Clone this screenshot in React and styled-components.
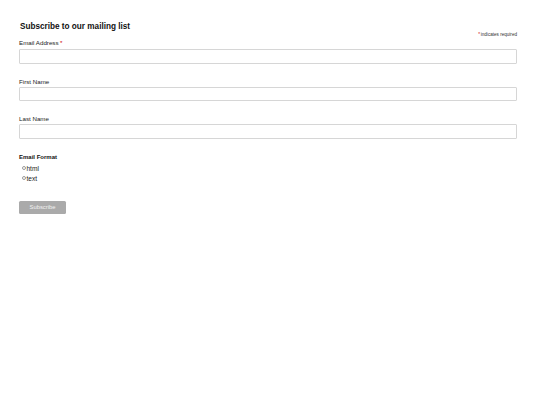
import styled, { createGlobalStyle } from 'styled-components'

const GlobalStyle = createGlobalStyle`
  html, body {
    margin: 0;
    padding: 0;
    background: #fff;
  }
  body {
    font-family: "Liberation Sans", Arial, Helvetica, sans-serif;
    color: #222;
  }
`

const Page = styled.form`
  padding: 22px 23px 0 19px;
  width: 540px;
  box-sizing: border-box;
`

const Title = styled.h2`
  margin: 0 0 0 1px;
  font-size: 8.2px;
  line-height: 10px;
  font-weight: 700;
  color: #111;
`

const RequiredNote = styled.div`
  font-size: 4.6px;
  line-height: 6px;
  text-align: right;
  color: #333;
`

const Star = styled.span`
  color: #ce0000;
  margin: 0 ${(props) => props.$gap || '0'};
`

const Field = styled.div`
  display: flex;
  flex-direction: column;
  margin-top: ${(props) => props.$top || '14px'};
`

const Label = styled.label`
  font-size: 6.2px;
  line-height: 8px;
  color: #222;
  margin-bottom: ${(props) => props.$gap || '1px'};
`

const Input = styled.input`
  box-sizing: border-box;
  width: 100%;
  height: 14.5px;
  margin: 0;
  padding: 0 3px;
  border: 1px solid #d6d6d6;
  border-radius: 1px;
  background: #fff;
  font-size: 6px;
  outline: 0;
`

const GroupTitle = styled.div`
  margin-top: 14.5px;
  font-size: 6px;
  line-height: 8px;
  font-weight: 700;
  color: #111;
`

const RadioList = styled.ul`
  list-style: none;
  margin: 2px 0 0;
  padding: 0;
`

const RadioRow = styled.li`
  display: flex;
  align-items: center;
  height: 10px;
  padding-left: 2.5px;
  font-size: 6.6px;
  color: #222;
`

const Radio = styled.input`
  appearance: none;
  box-sizing: border-box;
  flex: none;
  width: 4.4px;
  height: 4.4px;
  margin: 0 0.5px 0 0;
  border: 0.5px solid #9a9a9a;
  border-radius: 50%;
  background: #fff;
`

const Button = styled.button`
  display: block;
  margin-top: 18px;
  width: 47px;
  height: 13px;
  padding: 0;
  border: 0;
  border-radius: 1.5px;
  background: #aaa;
  color: #f2f2f2;
  font-family: inherit;
  font-size: 5.8px;
  line-height: 13px;
`

const fields = [
  { id: 'EMAIL', label: 'Email Address', required: true, top: '1px', gap: '2px' },
  { id: 'FNAME', label: 'First Name' },
  { id: 'LNAME', label: 'Last Name' },
]

export default function App() {
  return (
    <>
      <GlobalStyle />
      <Page onSubmit={(e) => e.preventDefault()}>
        <Title>Subscribe to our mailing list</Title>
        <RequiredNote>
          <Star $gap="0.8px">*</Star>indicates required
        </RequiredNote>
        {fields.map((f) => (
          <Field key={f.id} $top={f.top}>
            <Label htmlFor={f.id} $gap={f.gap}>
              {f.label}
              {f.required && <Star $gap="1.5px">*</Star>}
            </Label>
            <Input id={f.id} type={f.id === 'EMAIL' ? 'email' : 'text'} />
          </Field>
        ))}
        <GroupTitle>Email Format</GroupTitle>
        <RadioList>
          <RadioRow>
            <Radio type="radio" name="EMAILTYPE" value="html" id="fmt-html" />
            <label htmlFor="fmt-html">html</label>
          </RadioRow>
          <RadioRow>
            <Radio type="radio" name="EMAILTYPE" value="text" id="fmt-text" />
            <label htmlFor="fmt-text">text</label>
          </RadioRow>
        </RadioList>
        <Button type="submit">Subscribe</Button>
      </Page>
    </>
  )
}
